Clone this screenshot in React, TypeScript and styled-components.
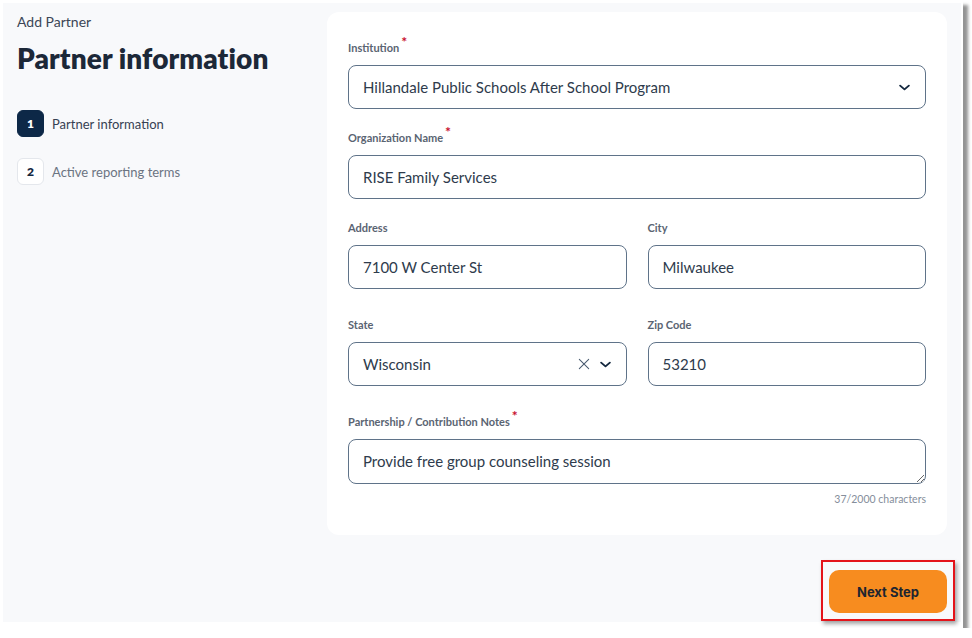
import React from "react";
import styled, { createGlobalStyle } from "styled-components";

const GlobalStyle = createGlobalStyle`
	html, body {
		margin: 0;
		background: #ffffff;
	}
	body {
		font-family: "Lato", "Open Sans", sans-serif;
		color: #2e3b4c;
	}
	* {
		box-sizing: border-box;
	}
`;

function ChevronIcon() {
	return (
		<svg width="15" height="15" viewBox="0 0 24 24" fill="none" stroke="#14283f" strokeWidth="3" strokeLinecap="round" strokeLinejoin="round">
			<path d="M5 9l7 6 7-6" />
		</svg>
	);
}

function ClearIcon() {
	return (
		<svg width="14" height="14" viewBox="0 0 24 24" fill="none" stroke="#4a5b70" strokeWidth="1.8" strokeLinecap="round">
			<path d="M4 4l16 16M20 4L4 20" />
		</svg>
	);
}

type FieldProps = {
	label: string;
	required?: boolean;
	children: React.ReactNode;
};

function Field({ label, required, children }: FieldProps) {
	return (
		<FieldBox>
			<Label>
				{label}
				{required && <Asterisk>*</Asterisk>}
			</Label>
			{children}
		</FieldBox>
	);
}

export default function App() {
	return (
		<>
			<GlobalStyle />
			<Frame>
				<Page>
					<Sidebar>
						<Eyebrow>Add Partner</Eyebrow>
						<Title>Partner information</Title>
						<Steps>
							<Step>
								<StepNumber $active>1</StepNumber>
								<StepLabel $active>Partner information</StepLabel>
							</Step>
							<Step>
								<StepNumber>2</StepNumber>
								<StepLabel>Active reporting terms</StepLabel>
							</Step>
						</Steps>
					</Sidebar>

					<Main>
						<Card>
							<Section $top={0}>
								<Field label="Institution" required>
									<Control>
										<Value>Hillandale Public Schools After School Program</Value>
										<Icons>
											<ChevronIcon />
										</Icons>
									</Control>
								</Field>
							</Section>

							<Section $top={21}>
								<Field label="Organization Name" required>
									<Control>
										<Value>RISE Family Services</Value>
									</Control>
								</Field>
							</Section>

							<Columns $top={21}>
								<Field label="Address">
									<Control>
										<Value>7100 W Center St</Value>
									</Control>
								</Field>
								<Field label="City">
									<Control>
										<Value>Milwaukee</Value>
									</Control>
								</Field>
							</Columns>

							<Columns $top={28}>
								<Field label="State">
									<Control>
										<Value>Wisconsin</Value>
										<Icons>
											<ClearIcon />
											<ChevronIcon />
										</Icons>
									</Control>
								</Field>
								<Field label="Zip Code">
									<Control>
										<Value>53210</Value>
									</Control>
								</Field>
							</Columns>

							<Section $top={28}>
								<Field label="Partnership / Contribution Notes" required>
									<Notes rows={1} readOnly defaultValue="Provide free group counseling session" />
								</Field>
								<Counter>37/2000 characters</Counter>
							</Section>
						</Card>

						<Footer>
							<Highlight>
								<NextButton type="button">Next Step</NextButton>
							</Highlight>
						</Footer>
					</Main>
				</Page>
			</Frame>
		</>
	);
}

const Frame = styled.div`
	width: 963px;
	height: 628px;
	padding: 3px 2px 6px 3px;
	background: #ffffff;
	box-shadow: 5px 5px 3px rgba(60, 60, 60, 0.55);
`;

const Page = styled.div`
	height: 100%;
	display: grid;
	grid-template-columns: 324px 1fr;
	padding: 9px 14px 0 0;
	background: #f8f9fb;
`;

const Sidebar = styled.aside`
	padding: 1px 0 0 14px;
`;

const Eyebrow = styled.div`
	font-size: 14px;
	line-height: 18px;
	color: #3b4656;
`;

const Title = styled.h1`
	margin: 10px 0 0;
	font-size: 28px;
	line-height: 34px;
	font-weight: 800;
	color: #1c2838;
	letter-spacing: 0.1px;
`;

const Steps = styled.div`
	display: flex;
	flex-direction: column;
	gap: 21px;
	margin-top: 35px;
`;

const Step = styled.div`
	display: flex;
	align-items: center;
	gap: 8px;
`;

const StepNumber = styled.div<{ $active?: boolean }>`
	width: 27px;
	height: 27px;
	display: flex;
	align-items: center;
	justify-content: center;
	border-radius: 6px;
	font-size: 12px;
	font-weight: 800;
	background: ${(p) => (p.$active ? "#0d2847" : "#ffffff")};
	color: ${(p) => (p.$active ? "#ffffff" : "#14283f")};
	border: 1px solid ${(p) => (p.$active ? "#0d2847" : "#e4e7ec")};
`;

const StepLabel = styled.span<{ $active?: boolean }>`
	font-size: 13px;
	color: ${(p) => (p.$active ? "#364152" : "#6b7482")};
`;

const Main = styled.main`
	display: flex;
	flex-direction: column;
`;

const Card = styled.section`
	height: 523px;
	padding: 28px 21px 0;
	background: #ffffff;
	border-radius: 12px;
`;

const Section = styled.div<{ $top: number }>`
	margin-top: ${(p) => p.$top}px;
`;

const Columns = styled.div<{ $top: number }>`
	display: grid;
	grid-template-columns: 1fr 1fr;
	gap: 21px;
	margin-top: ${(p) => p.$top}px;
`;

const FieldBox = styled.div`
	display: flex;
	flex-direction: column;
	gap: 9px;
`;

const Label = styled.label`
	display: block;
	height: 16px;
	font-size: 11px;
	line-height: 16px;
	font-weight: 700;
	color: #5a6472;
`;

const Asterisk = styled.span`
	position: relative;
	top: -5px;
	margin-left: 2px;
	font-size: 14px;
	line-height: 0;
	color: #c8102e;
`;

const Control = styled.div`
	height: 44px;
	display: flex;
	align-items: center;
	padding: 0 13px 0 14px;
	border: 1.5px solid #5f7389;
	border-radius: 8px;
	background: #ffffff;
`;

const Value = styled.span`
	flex: 1;
	font-size: 15px;
	color: #2e3b4c;
	white-space: nowrap;
`;

const Icons = styled.div`
	display: flex;
	align-items: center;
	gap: 7px;

	svg {
		display: block;
	}
`;

const Notes = styled.textarea`
	display: block;
	width: 100%;
	height: 45px;
	padding: 12px 14px;
	border: 1.5px solid #5f7389;
	border-radius: 8px;
	font-family: inherit;
	font-size: 15px;
	line-height: 18px;
	color: #2e3b4c;
	background: #ffffff;
	resize: vertical;
	outline: none;
`;

const Counter = styled.div`
	margin-top: 8px;
	text-align: right;
	font-size: 10.5px;
	line-height: 14px;
	color: #858e9b;
`;

const Footer = styled.div`
	display: flex;
	justify-content: flex-end;
	margin: 25px -8px 0 0;
`;

const Highlight = styled.div`
	padding: 8px 6px 6px;
	border: 2px solid #e4141b;
	box-shadow: 2px 3px 4px rgba(0, 0, 0, 0.35);
`;

const NextButton = styled.button`
	width: 118px;
	height: 43px;
	border: none;
	border-radius: 10px;
	background: #f78c1f;
	font-family: "Inter", "Liberation Sans", sans-serif;
	font-size: 13px;
	font-weight: 700;
	color: #1d2530;
	cursor: pointer;
`;
